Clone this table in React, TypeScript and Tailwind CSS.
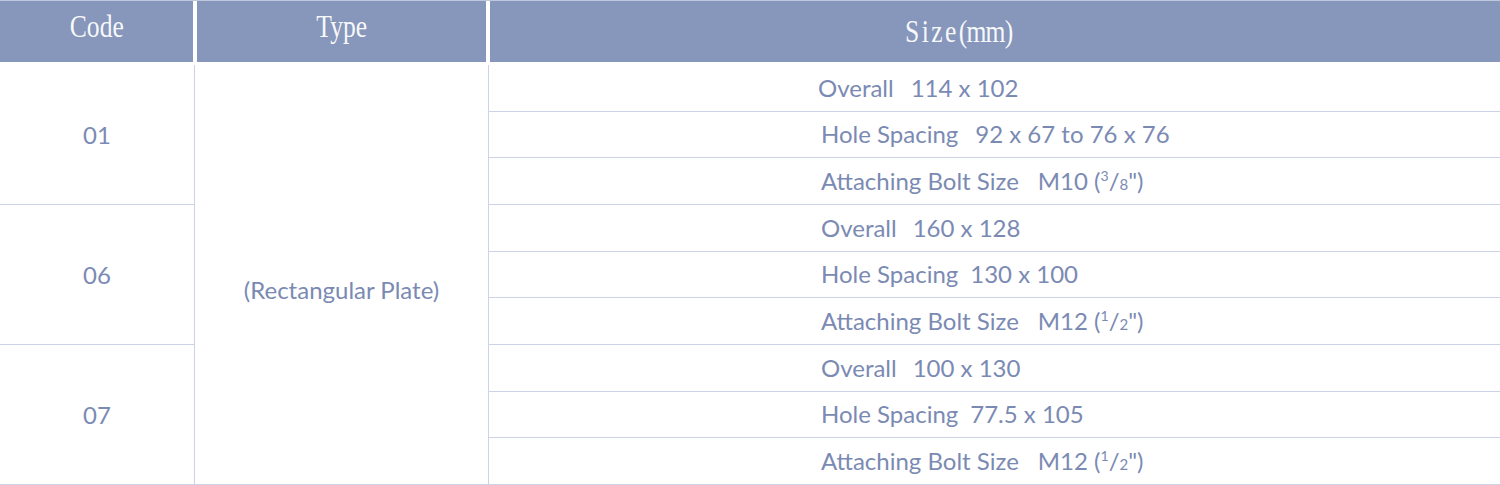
import React from "react";

const bodyFont = { fontFamily: "Lato, 'Open Sans', sans-serif" };

type Row = { label: string; value: React.ReactNode; gapCls: string; plCls: string };

const Frac = ({ n, d }: { n: string; d: string }) => (
  <>
    (<span className="text-[14px] align-super leading-none">{n}</span>
    <span>/</span>
    <span className="text-[15px] leading-none">{d}</span>")
  </>
);

const rows: Row[] = [
  { label: "Overall", value: "114 x 102", gapCls: "ml-[17px]", plCls: "pl-[329px]" },
  { label: "Hole Spacing", value: "92 x 67 to 76 x 76", gapCls: "ml-[17px]", plCls: "pl-[332px]" },
  {
    label: "Attaching Bolt Size",
    value: (
      <>
        M10 <Frac n="3" d="8" />
      </>
    ),
    gapCls: "ml-[19px]",
    plCls: "pl-[332px]",
  },
  { label: "Overall", value: "160 x 128", gapCls: "ml-[16px]", plCls: "pl-[332px]" },
  { label: "Hole Spacing", value: "130 x 100", gapCls: "ml-[12px]", plCls: "pl-[332px]" },
  {
    label: "Attaching Bolt Size",
    value: (
      <>
        M12 <Frac n="1" d="2" />
      </>
    ),
    gapCls: "ml-[19px]",
    plCls: "pl-[332px]",
  },
  { label: "Overall", value: "100 x 130", gapCls: "ml-[16px]", plCls: "pl-[332px]" },
  { label: "Hole Spacing", value: "77.5 x 105", gapCls: "ml-[12px]", plCls: "pl-[332px]" },
  {
    label: "Attaching Bolt Size",
    value: (
      <>
        M12 <Frac n="1" d="2" />
      </>
    ),
    gapCls: "ml-[19px]",
    plCls: "pl-[332px]",
  },
];

const headFont = { fontFamily: "'Liberation Serif', 'DejaVu Serif', serif" };

export default function App() {
  return (
    <div className="w-[1500px] h-[485px] bg-white overflow-hidden">
      {/* Header */}
      <div className="flex gap-[4px] border-t border-[#bfc7dd]" style={headFont}>
        <div className="w-[193px] h-[61px] bg-[#8797bb] flex justify-center items-start pt-[9px] text-white/95 text-[32px] leading-none">
          <span className="inline-block scale-x-[0.8]">Code</span>
        </div>
        <div className="w-[289px] h-[61px] bg-[#8797bb] flex justify-center items-start pt-[9px] text-white/95 text-[32px] leading-none">
          <span className="inline-block scale-x-[0.8]">Type</span>
        </div>
        <div className="flex-1 h-[61px] bg-[#8797bb] flex justify-start items-start pl-[415px] pt-[14px] text-white/95 text-[32px] leading-none">
          <span className="inline-block scale-x-[0.8] origin-left whitespace-nowrap">
            <span className="tracking-[3px]">Size</span>
            <span className="tracking-[-1px]">(mm)</span>
          </span>
        </div>
      </div>

      {/* Body */}
      <div
        className="mt-[3px] h-[420px] grid grid-cols-[195px_294px_1fr] grid-rows-[repeat(9,1fr)] text-[#7b8ab3] text-[24px]"
        style={bodyFont}
      >
        <div className="row-start-1 row-span-3 col-start-1 border-r border-b border-[#cdd3e6] flex items-center justify-center">
          01
        </div>
        <div className="row-start-4 row-span-3 col-start-1 border-r border-b border-[#cdd3e6] flex items-center justify-center">
          06
        </div>
        <div className="row-start-7 row-span-3 col-start-1 border-r border-b border-[#cdd3e6] flex items-center justify-center">
          07
        </div>
        <div className="row-start-1 row-span-9 col-start-2 border-r border-b border-[#cdd3e6] flex items-center justify-center pt-[30px]">
          (Rectangular Plate)
        </div>
        {rows.map((r, i) => (
          <div
            key={i}
            className={`col-start-3 border-b border-[#cdd3e6] flex items-center whitespace-nowrap ${r.plCls}`}
            style={{ gridRowStart: i + 1 }}
          >
            <span>{r.label}</span>
            <span className={r.gapCls}>{r.value}</span>
          </div>
        ))}
      </div>
    </div>
  );
}
